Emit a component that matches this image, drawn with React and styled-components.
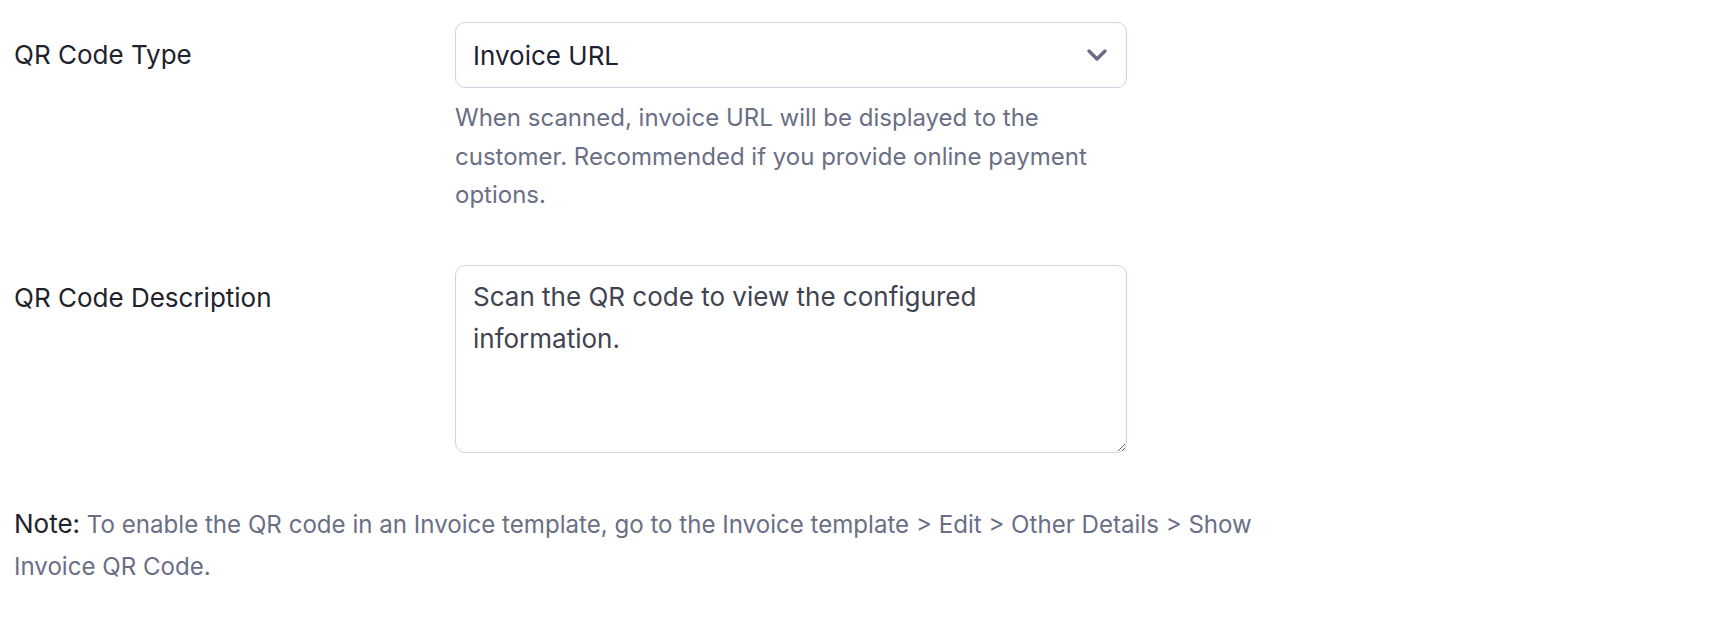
import React from "react";
import styled, { createGlobalStyle } from "styled-components";

const GlobalStyle = createGlobalStyle`
  html, body {
    margin: 0;
    padding: 0;
    background: #ffffff;
  }
  body {
    font-family: Inter, "Noto Sans", sans-serif;
    color: #21232b;
  }
`;

const Page = styled.div`
  padding: 22px 0 0 14px;
`;

const FieldRow = styled.div`
  display: grid;
  grid-template-columns: 441px 672px;
  margin-bottom: ${(p) => p.gap || 0}px;
`;

const Label = styled.label`
  font-size: 26px;
  line-height: 66px;
  color: #21232b;
`;

const Field = styled.div`
  display: flex;
  flex-direction: column;
`;

const SelectBox = styled.div`
  box-sizing: border-box;
  height: 66px;
  display: flex;
  align-items: center;
  justify-content: space-between;
  padding: 0 17px;
  border: 1.5px solid #d2d1e1;
  border-radius: 10px;
  font-size: 26px;
  color: #1d2232;
  cursor: pointer;
`;

const Chevron = styled.svg`
  width: 20px;
  height: 12px;
  margin-right: 2px;
`;

const Help = styled.p`
  margin: 11px 0 0;
  font-size: 24px;
  line-height: 38.6px;
  color: #6a6f85;
`;

const TextArea = styled.textarea`
  box-sizing: border-box;
  width: 672px;
  height: 188px;
  padding: 10px 17px;
  border: 1.5px solid #d2d1e1;
  border-radius: 10px;
  font-family: Inter, "Noto Sans", sans-serif;
  font-size: 26px;
  line-height: 42px;
  color: #3f4450;
  outline: none;
  resize: both;
`;

const Note = styled.p`
  margin: 0;
  width: 1290px;
  font-size: 24.1px;
  line-height: 42px;
  color: #6a6f85;
`;

const NoteLead = styled.span`
  font-size: 26px;
  line-height: 1;
  color: #21232b;
`;

export default function App() {
  return (
    <Page>
      <GlobalStyle />
      <FieldRow gap={50}>
        <Label>QR Code Type</Label>
        <Field>
          <SelectBox>
            <span>Invoice URL</span>
            <Chevron viewBox="0 0 20 12" fill="none">
              <polyline
                points="2,2 10,10 18,2"
                stroke="#6e6c84"
                strokeWidth="3.4"
                strokeLinecap="round"
                strokeLinejoin="round"
              />
            </Chevron>
          </SelectBox>
          <Help>
            When scanned, invoice URL will be displayed to the customer.
            Recommended if you provide online payment options.
          </Help>
        </Field>
      </FieldRow>
      <FieldRow gap={51}>
        <Label>QR Code Description</Label>
        <Field>
          <TextArea defaultValue="Scan the QR code to view the configured information." />
        </Field>
      </FieldRow>
      <Note>
        <NoteLead>Note:</NoteLead> To enable the QR code in an Invoice
        template, go to the Invoice template &gt; Edit &gt; Other Details &gt;
        Show Invoice QR Code.
      </Note>
    </Page>
  );
}
